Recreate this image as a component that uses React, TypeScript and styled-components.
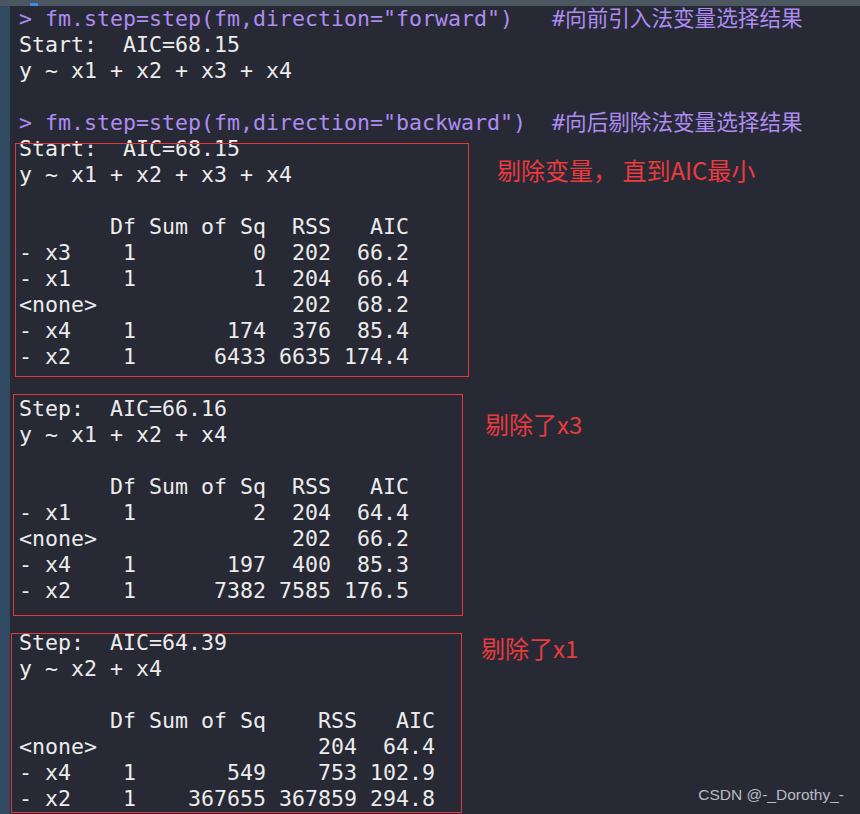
import React from 'react';
import styled, { createGlobalStyle } from 'styled-components';

interface Line {
  text: string;
  cmd?: boolean;
  comment?: string;
}

const LINES: Line[] = [
  { text: '> fm.step=step(fm,direction="forward")   ', cmd: true, comment: '#向前引入法变量选择结果' },
  { text: 'Start:  AIC=68.15' },
  { text: 'y ~ x1 + x2 + x3 + x4' },
  { text: '' },
  { text: '> fm.step=step(fm,direction="backward")  ', cmd: true, comment: '#向后剔除法变量选择结果' },
  { text: 'Start:  AIC=68.15' },
  { text: 'y ~ x1 + x2 + x3 + x4' },
  { text: '' },
  { text: '       Df Sum of Sq  RSS   AIC' },
  { text: '- x3    1         0  202  66.2' },
  { text: '- x1    1         1  204  66.4' },
  { text: '<none>               202  68.2' },
  { text: '- x4    1       174  376  85.4' },
  { text: '- x2    1      6433 6635 174.4' },
  { text: '' },
  { text: 'Step:  AIC=66.16' },
  { text: 'y ~ x1 + x2 + x4' },
  { text: '' },
  { text: '       Df Sum of Sq  RSS   AIC' },
  { text: '- x1    1         2  204  64.4' },
  { text: '<none>               202  66.2' },
  { text: '- x4    1       197  400  85.3' },
  { text: '- x2    1      7382 7585 176.5' },
  { text: '' },
  { text: 'Step:  AIC=64.39' },
  { text: 'y ~ x2 + x4' },
  { text: '' },
  { text: '       Df Sum of Sq    RSS   AIC' },
  { text: '<none>                 204  64.4' },
  { text: '- x4    1       549    753 102.9' },
  { text: '- x2    1    367655 367859 294.8' },
];

// red boxes + notes drawn on top of the console output
const BOXES = [
  { id: 1, left: 5, top: 137, width: 454, height: 234 },
  { id: 2, left: 3, top: 388, width: 450, height: 222 },
  { id: 3, left: 1, top: 627, width: 451, height: 180 },
];

const NOTES = [
  { id: 1, left: 487, top: 147, text: '剔除变量， 直到AIC最小' },
  { id: 2, left: 475, top: 401, text: '剔除了x3' },
  { id: 3, left: 471, top: 625, text: '剔除了x1' },
];

const App = () => {
  return (
    <>
      <GlobalStyle />
      <Screen>
        <TitleBar>
          <TitleIcon />
        </TitleBar>
        <Body>
          <Gutter />
          <Console>
            {LINES.map((line, i) => (
              <Row key={i} cmd={!!line.cmd}>
                {line.text || ' '}
                {line.comment && <Comment>{line.comment}</Comment>}
              </Row>
            ))}
            {BOXES.map(({ id, left, top, width, height }) => (
              <MarkBox key={id} style={{ left, top, width, height }} />
            ))}
            {NOTES.map(({ id, left, top, text }) => (
              <Note key={id} style={{ left, top }}>
                {text}
              </Note>
            ))}
          </Console>
        </Body>
        <Watermark>CSDN @-_Dorothy_-</Watermark>
      </Screen>
    </>
  );
};

export default App;

const GlobalStyle = createGlobalStyle`
  html, body {
    margin: 0;
    padding: 0;
    background: #272935;
  }
`;

const Screen = styled.div`
  position: relative;
  width: 860px;
  height: 814px;
  overflow: hidden;
  background-color: #272935;
  display: flex;
  flex-direction: column;
`;

const TitleBar = styled.div`
  height: 6px;
  flex-shrink: 0;
  display: flex;
  align-items: flex-end;
  padding-left: 30px;
  overflow: hidden;
  background-color: #4b5661;
`;

const TitleIcon = styled.span`
  display: block;
  width: 8px;
  height: 3px;
  background-color: #3b8ee8;
`;

const Body = styled.div`
  flex: 1;
  display: flex;
`;

const Gutter = styled.div`
  width: 10px;
  flex-shrink: 0;
  background-color: #2f4a61;
`;

const Console = styled.div`
  position: relative;
  flex: 1;
  padding-left: 9px;
`;

const Row = styled.div<{ cmd: boolean }>`
  height: 26px;
  font-family: 'DejaVu Sans Mono', 'Noto Sans CJK SC', monospace;
  font-size: 21.6px;
  line-height: 26px;
  white-space: pre;
  color: ${({ cmd }) => (cmd ? '#ad8cf2' : '#ececec')};
`;

const Comment = styled.span`
  font-family: 'DejaVu Sans Mono', 'Noto Sans CJK SC', monospace;
`;

const MarkBox = styled.div`
  position: absolute;
  border: 1px solid #e8363a;
  box-sizing: border-box;
`;

const Note = styled.div`
  position: absolute;
  font-family: 'Noto Sans CJK SC', sans-serif;
  font-size: 24px;
  line-height: 34px;
  white-space: pre;
  color: #ea3b3d;
`;

const Watermark = styled.div`
  position: absolute;
  right: 16px;
  bottom: 10px;
  font-family: 'Liberation Sans', Arial, sans-serif;
  font-size: 15.5px;
  color: #b9bcc2;
`;
